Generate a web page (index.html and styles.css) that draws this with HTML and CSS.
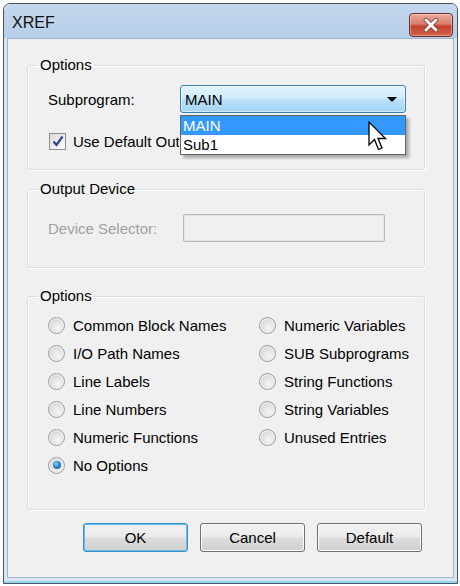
FILE: index.html
```html
<!DOCTYPE html>
<html lang="en">
<head>
    <meta charset="UTF-8">
    <meta name="viewport" content="width=device-width, initial-scale=1.0">
    <title>XREF</title>
    <link rel="stylesheet" href="styles.css">
</head>
<body>
    <div class="window">
        <div class="titlebar">
            <span class="title">XREF</span>
            <button class="close" type="button">
                <svg width="20" height="14" viewBox="0 0 20 14">
                    <path d="M5 2 L15 12 M15 2 L5 12" stroke="#7a2a20" stroke-width="4.5" stroke-linecap="round"/>
                    <path d="M5 2 L15 12 M15 2 L5 12" stroke="#fff" stroke-width="3" stroke-linecap="round"/>
                </svg>
            </button>
        </div>

        <div class="client">
            <fieldset class="group group-options">
                <legend>Options</legend>
                <div class="row">
                    <label class="field-label subprogram-label">Subprogram:</label>
                    <div class="combo-wrap">
                        <div class="combo">
                            <span>MAIN</span>
                            <span class="combo-arrow"></span>
                        </div>
                        <ul class="dropdown">
                            <li class="selected">MAIN</li>
                            <li>Sub1</li>
                        </ul>
                        <svg class="cursor" width="20" height="31" viewBox="0 0 20 31">
                            <path d="M1 1 L1 24 L6.5 18.5 L10.5 28.5 L14 27 L10 17.5 L17.5 17.5 Z" fill="#fff" stroke="#000" stroke-width="1.3" stroke-linejoin="miter"/>
                        </svg>
                    </div>
                </div>
                <label class="check-row">
                    <span class="checkbox">
                        <svg width="12" height="12" viewBox="0 0 12 12">
                            <path d="M1.5 6.5 L4.5 10 L10.5 1.5" fill="none" stroke="#33478c" stroke-width="2.2"/>
                        </svg>
                    </span>
                    <span class="check-text">Use Default Output Device</span>
                </label>
            </fieldset>

            <fieldset class="group group-device">
                <legend>Output Device</legend>
                <div class="row">
                    <label class="field-label device-label disabled">Device Selector:</label>
                    <div class="textbox"></div>
                </div>
            </fieldset>

            <fieldset class="group group-xref">
                <legend>Options</legend>
                <div class="radio-grid">
                    <label class="radio-row"><span class="radio"></span>Common Block Names</label>
                    <label class="radio-row"><span class="radio"></span>I/O Path Names</label>
                    <label class="radio-row"><span class="radio"></span>Line Labels</label>
                    <label class="radio-row"><span class="radio"></span>Line Numbers</label>
                    <label class="radio-row"><span class="radio"></span>Numeric Functions</label>
                    <label class="radio-row"><span class="radio checked"></span>No Options</label>
                    <label class="radio-row"><span class="radio"></span>Numeric Variables</label>
                    <label class="radio-row"><span class="radio"></span>SUB Subprograms</label>
                    <label class="radio-row"><span class="radio"></span>String Functions</label>
                    <label class="radio-row"><span class="radio"></span>String Variables</label>
                    <label class="radio-row"><span class="radio"></span>Unused Entries</label>
                </div>
            </fieldset>

            <div class="buttons">
                <button class="button default" type="button">OK</button>
                <button class="button" type="button">Cancel</button>
                <button class="button" type="button">Default</button>
            </div>
        </div>
    </div>
</body>
</html>
```

FILE: styles.css
```css
body {
    margin: 0;
    background: #fff;
    font-family: 'Liberation Sans', Arial, sans-serif;
    font-size: 15px;
    color: #000;
}

.window {
    margin: 3px 0 0 3px;
    width: 455px;
    height: 581px;
    box-sizing: border-box;
    border: 1px solid #4a5360;
    border-radius: 7px 7px 0 0;
    background: #d8e5f2;
    box-shadow: inset 0 -2px 0 #95d5ee;
    display: flex;
    flex-direction: column;
    overflow: hidden;
}

.titlebar {
    height: 34px;
    flex: none;
    display: flex;
    align-items: center;
    justify-content: space-between;
    padding: 0 4px 0 8px;
    background: linear-gradient(#c3d8ee, #b6cfe9);
}

.title {
    font-size: 16px;
    color: #111;
    margin-top: 3px;
}

.close {
    width: 44px;
    height: 24px;
    margin-top: 7px;
    padding: 0;
    border: 1px solid #6d2b22;
    border-radius: 4px;
    background: linear-gradient(#e9a99b 0%, #d7806d 45%, #c4412c 55%, #d3624d 100%);
    box-shadow: inset 0 0 0 1px rgba(255,255,255,0.35);
    display: flex;
    align-items: center;
    justify-content: center;
}

.client {
    flex: 1;
    margin: 0 3px 5px 3px;
    border: 1px solid #a0b4cb;
    background: #f0f0f0;
    padding-top: 16px;
}

.group {
    margin: 0 28px 0 19px;
    padding: 0 10px;
    border: 1px solid #d5dfe5;
    border-radius: 3px;
    box-shadow: inset 1px 1px 0 #fff, 1px 1px 0 #fff;
    min-width: 0;
}

.group legend {
    padding: 0 2px;
    line-height: 20px;
}

.group-options {
    padding-top: 10px;
    padding-bottom: 18px;
}

.group-device {
    margin-top: 9px;
    padding-top: 15px;
    padding-bottom: 25px;
}

.group-xref {
    margin-top: 18px;
    padding-top: 5px;
    padding-bottom: 30px;
}

.row {
    display: flex;
    align-items: center;
    padding-left: 10px;
}

.field-label {
    flex: none;
}

.subprogram-label {
    width: 132px;
}

.device-label {
    width: 135px;
}

.disabled {
    color: #a0a0a0;
}

.combo-wrap {
    position: relative;
}

.combo {
    width: 226px;
    height: 28px;
    box-sizing: border-box;
    border: 1px solid #3c7fb1;
    border-radius: 3px;
    background: linear-gradient(#e3f3fc 0%, #d2ecfa 45%, #b7e0f8 55%, #a6d5f3 100%);
    box-shadow: inset 0 0 0 1px rgba(255,255,255,0.5);
    display: flex;
    align-items: center;
    justify-content: space-between;
    padding: 0 8px 0 4px;
}

.combo-arrow {
    width: 0;
    height: 0;
    border-left: 5px solid transparent;
    border-right: 5px solid transparent;
    border-top: 5px solid #000;
}

.dropdown {
    position: absolute;
    top: 30px;
    left: 0;
    width: 226px;
    box-sizing: border-box;
    margin: 0;
    padding: 0;
    list-style: none;
    background: #fff;
    border: 1px solid #646464;
    box-shadow: 3px 3px 3px rgba(0,0,0,0.3);
}

.dropdown li {
    height: 19px;
    line-height: 19px;
    padding-left: 2px;
}

.dropdown li.selected {
    background: #3399ff;
    color: #fff;
}

.cursor {
    position: absolute;
    left: 188px;
    top: 36px;
}

.check-row {
    display: flex;
    align-items: center;
    gap: 7px;
    margin-top: 18px;
    padding-left: 11px;
    height: 20px;
}

.check-text {
    width: 106px;
    overflow: hidden;
    white-space: nowrap;
}

.checkbox {
    flex: none;
    width: 15px;
    height: 15px;
    border: 1px solid #8e8f8f;
    background: linear-gradient(135deg, #dcdcdc, #fbfbfb);
    display: flex;
    align-items: center;
    justify-content: center;
}

.textbox {
    width: 202px;
    height: 28px;
    box-sizing: border-box;
    border: 1px solid #b9b9b9;
    border-radius: 2px;
    box-shadow: inset 0 0 0 1px #e6e6e6;
    background: #f0f0f0;
}

.radio-grid {
    display: grid;
    grid-template-columns: 211px auto;
    grid-template-rows: repeat(6, 28px);
    grid-auto-flow: column;
    padding-left: 10px;
}

.radio-row {
    display: flex;
    align-items: center;
    gap: 8px;
    white-space: nowrap;
}

.radio {
    width: 15px;
    height: 15px;
    border: 1px solid #9a9a9a;
    border-radius: 50%;
    background: radial-gradient(circle at 60% 65%, #f6f6f6 0%, #e2e2e2 45%, #c9c9c9 100%);
    box-shadow: inset 0 0 0 1px #f4f4f4;
    display: flex;
    align-items: center;
    justify-content: center;
}

.radio.checked::after {
    content: '';
    width: 8px;
    height: 8px;
    border-radius: 50%;
    background: radial-gradient(circle at 40% 35%, #8fd3f7 0%, #2a8bc9 45%, #174d7c 100%);
}

.buttons {
    display: flex;
    justify-content: flex-end;
    gap: 12px;
    margin: 13px 31px 0 0;
}

.button {
    width: 105px;
    height: 29px;
    padding: 0;
    font: inherit;
    color: #000;
    border: 1px solid #707070;
    border-radius: 3px;
    background: linear-gradient(#f2f2f2 0%, #ebebeb 48%, #dddddd 52%, #cfcfcf 100%);
    box-shadow: inset 0 0 0 1px #fbfbfb;
}

.button.default {
    border-color: #3c8dc8;
    box-shadow: inset 0 0 0 1px #62c0ef;
}
```
